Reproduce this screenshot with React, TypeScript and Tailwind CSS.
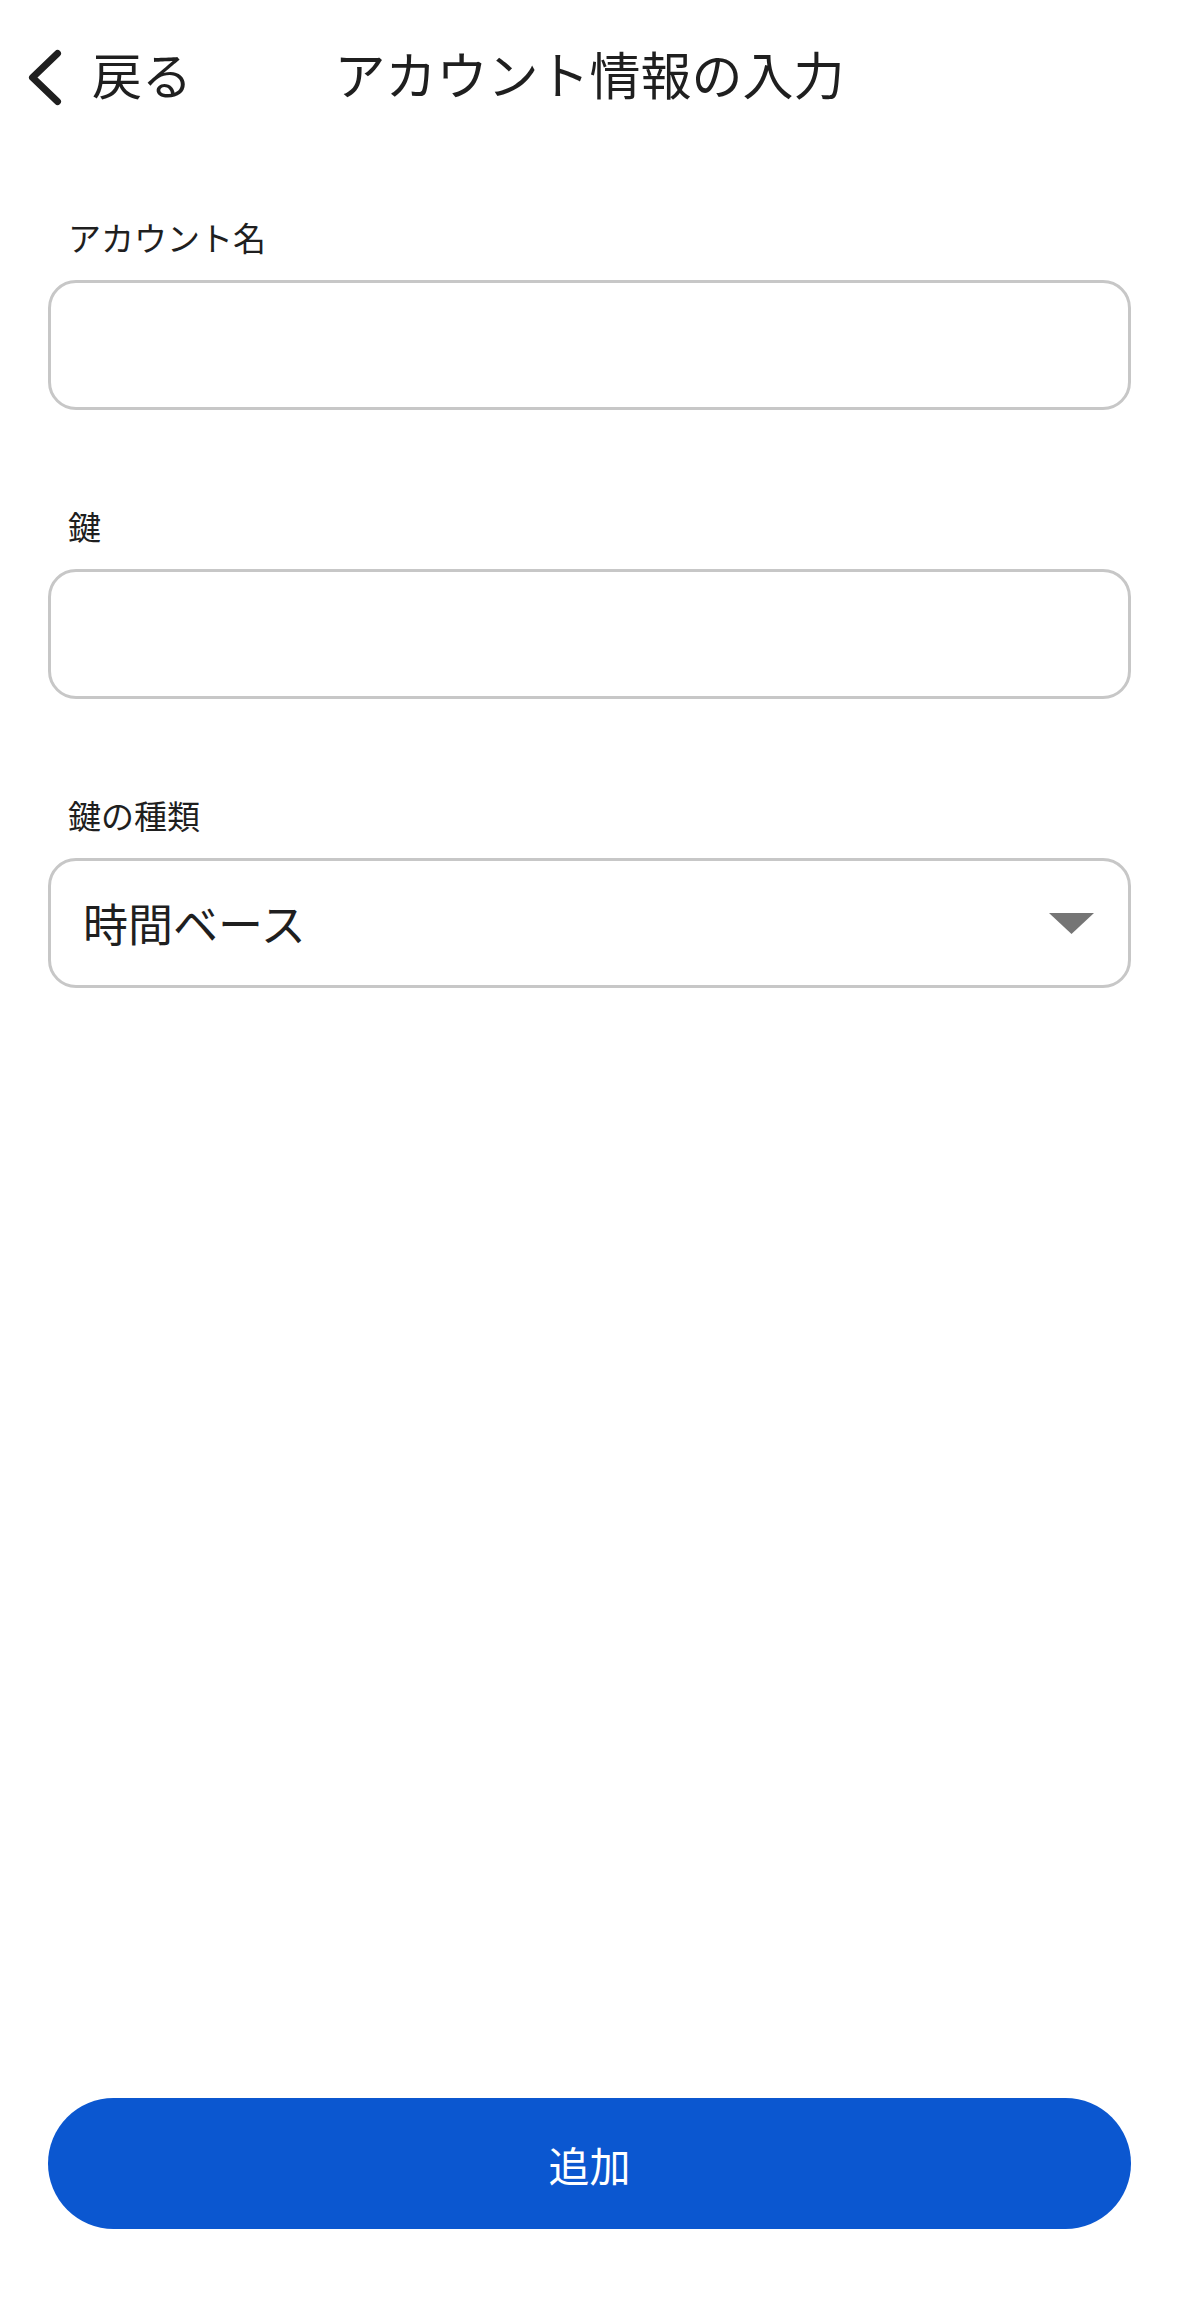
import React, { useState } from 'react';

const FONT = '"Noto Sans CJK JP", "Noto Sans", sans-serif';

const Field: React.FC<{ label: string; children: React.ReactNode; first?: boolean }> = ({ label, children, first }) => (
  <div className={first ? 'mt-[63px]' : 'mt-[96px]'}>
    <label className="block pl-[68px] text-[33px] leading-[40px] text-[#1f1f1f]">{label}</label>
    <div className="mt-[23px] mx-[48px]">{children}</div>
  </div>
);

const App: React.FC = () => {
  const [name, setName] = useState('');
  const [secret, setSecret] = useState('');
  const [keyType] = useState('時間ベース');

  return (
    <div className="flex flex-col h-[2298px] bg-white" style={{ fontFamily: FONT }}>
      {/* Header */}
      <header className="grid grid-cols-[1fr_auto_1fr] items-center h-[154px]">
        <button className="flex items-center pl-[24px] text-[#1f1f1f]">
          <svg width="40" height="64" viewBox="0 0 40 64" fill="none">
            <path d="M33.5 8.5 L8.5 32.5 L33.5 56.5" stroke="#1f1f1f" strokeWidth="7" strokeLinecap="round" strokeLinejoin="round" />
          </svg>
          <span className="ml-[28px] pb-[8px] text-[50px] leading-[64px]">戻る</span>
        </button>
        <h1 className="pb-[8px] text-[51px] leading-[64px] text-[#1f1f1f] font-normal">アカウント情報の入力</h1>
        <div />
      </header>

      <Field label="アカウント名" first>
        <input
          value={name}
          onChange={e => setName(e.target.value)}
          className="block w-full h-[130px] border-[3px] border-[#c7c7c7] rounded-[28px] px-[32px] text-[45px] text-[#1f1f1f] outline-none"
        />
      </Field>

      <Field label="鍵">
        <input
          value={secret}
          onChange={e => setSecret(e.target.value)}
          className="block w-full h-[130px] border-[3px] border-[#c7c7c7] rounded-[28px] px-[32px] text-[45px] text-[#1f1f1f] outline-none"
        />
      </Field>

      <Field label="鍵の種類">
        <button className="flex w-full h-[130px] items-center justify-between border-[3px] border-[#c7c7c7] rounded-[28px] pl-[32px] pr-[34px]">
          <span className="text-[45px] leading-[56px] text-[#1f1f1f]">{keyType}</span>
          <svg width="45" height="21" viewBox="0 0 45 21">
            <polygon points="0,0 45,0 22.5,21" fill="#757575" />
          </svg>
        </button>
      </Field>

      <button className="mt-auto mb-[69px] mx-[48px] h-[131px] rounded-full bg-[#0b57d0] text-white text-[41px] leading-[52px]">
        追加
      </button>
    </div>
  );
};

export default App;
